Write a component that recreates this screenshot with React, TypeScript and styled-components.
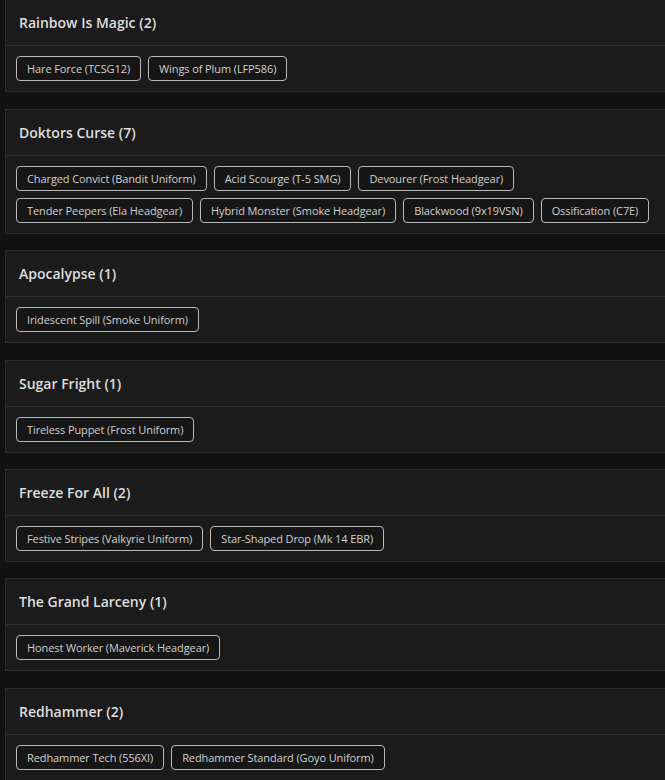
import React from "react";
import styled, { createGlobalStyle } from "styled-components";

const Global = createGlobalStyle`
  html, body { margin: 0; padding: 0; background: #111111; overflow: hidden; }
  body { font-family: "Open Sans", "Liberation Sans", sans-serif; }
`;

const Page = styled.div`
  display: flex;
  flex-direction: column;
  gap: 16.4px;
  padding-left: 5px;
  margin-top: -0.6px;
  margin-right: -10px;
`;

const Card = styled.section`
  background: #1b1b1b;
  border: 1px solid #2c2c2c;
  display: flex;
  flex-direction: column;
`;

const Header = styled.div`
  height: 45px;
  display: flex;
  align-items: center;
  padding-left: 13px;
  border-bottom: 1px solid #2e2e2e;
  color: #dedede;
  font-size: 14px;
  font-weight: 600;
`;

const Body = styled.div`
  display: flex;
  flex-wrap: wrap;
  gap: 7px 7px;
  padding: 10px;
`;

const Tag = styled.span`
  height: 25px;
  box-sizing: border-box;
  display: inline-flex;
  align-items: center;
  padding: 0 10px;
  border: 1px solid #b8b8b8;
  border-radius: 4px;
  background: #161616;
  color: #d0d0d0;
  font-size: 11px;
  line-height: 1;
  letter-spacing: -0.1px;
  white-space: nowrap;
`;

const data: { title: string; items: string[] }[] = [
  { title: "Rainbow Is Magic", items: ["Hare Force (TCSG12)", "Wings of Plum (LFP586)"] },
  {
    title: "Doktors Curse",
    items: [
      "Charged Convict (Bandit Uniform)",
      "Acid Scourge (T-5 SMG)",
      "Devourer (Frost Headgear)",
      "Tender Peepers (Ela Headgear)",
      "Hybrid Monster (Smoke Headgear)",
      "Blackwood (9x19VSN)",
      "Ossification (C7E)",
    ],
  },
  { title: "Apocalypse", items: ["Iridescent Spill (Smoke Uniform)"] },
  { title: "Sugar Fright", items: ["Tireless Puppet (Frost Uniform)"] },
  { title: "Freeze For All", items: ["Festive Stripes (Valkyrie Uniform)", "Star-Shaped Drop (Mk 14 EBR)"] },
  { title: "The Grand Larceny", items: ["Honest Worker (Maverick Headgear)"] },
  { title: "Redhammer", items: ["Redhammer Tech (556XI)", "Redhammer Standard (Goyo Uniform)"] },
];

export default function App() {
  return (
    <>
      <Global />
      <Page>
        {data.map((c) => (
          <Card key={c.title}>
            <Header>
              {c.title} ({c.items.length})
            </Header>
            <Body>
              {c.items.map((i) => (
                <Tag key={i}>{i}</Tag>
              ))}
            </Body>
          </Card>
        ))}
      </Page>
    </>
  );
}
